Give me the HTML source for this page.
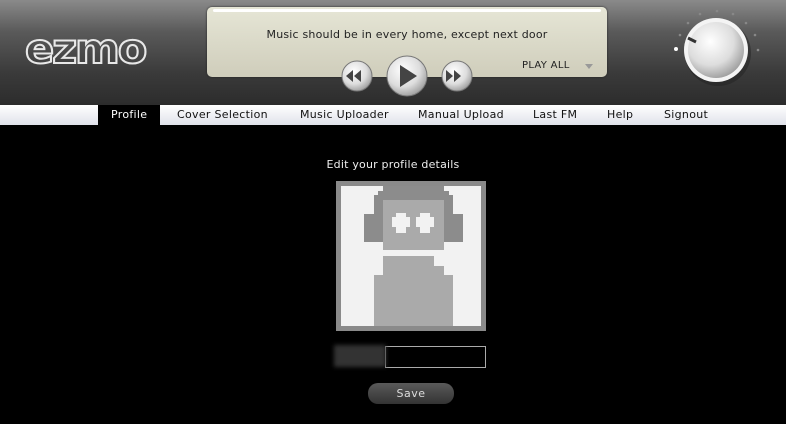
<!DOCTYPE html>
<html><head><style>
body{margin:0;width:786px;height:424px;background:#000;overflow:hidden;font-family:"DejaVu Sans","Liberation Sans",sans-serif;position:relative}
.hdr{position:absolute;left:0;top:0;width:786px;height:105px;background:linear-gradient(#8a8a8a 0%,#5a5a5a 30%,#3a3a3a 70%,#2c2c2c 100%)}
.logo{position:absolute;left:25px;top:25px;font:bold 41px "DejaVu Sans",sans-serif;color:transparent;-webkit-text-stroke:2px #e8e8e8;letter-spacing:-2px;transform:scaleX(1.05);transform-origin:left}
.panel{position:absolute;left:207px;top:7px;width:400px;height:70px;border-radius:5px;background:linear-gradient(#e6e6d6,#cfcdbb);box-shadow:0 0 2px #222}
.panel:before{content:"";position:absolute;left:6px;right:6px;top:2px;height:3px;background:#fff;border-radius:2px}
.msg{position:absolute;left:0;width:400px;top:21px;text-align:center;font-size:11px;color:#222;letter-spacing:0.2px}
.pa{position:absolute;left:315px;top:53px;font-size:10px;color:#222;letter-spacing:0.3px}
.tri{position:absolute;left:378px;top:57px;border:4px solid transparent;border-top:5px solid #999}
.nav{position:absolute;left:0;top:105px;width:786px;height:20px;background:linear-gradient(#fff,#e0e2ea);font-size:11px;color:#111;letter-spacing:0.3px}
.nav span{position:absolute;top:3px}
.act{position:absolute;left:98px;top:0;width:62px;height:20px;background:#000}
.t{position:absolute;left:0;width:786px;top:158px;text-align:center;color:#eee;font-size:11px;letter-spacing:0.2px}
.frame{position:absolute;left:336px;top:181px;width:140px;height:140px;border:5px solid #8a8a8a;background:#f2f2f2}
.inp{position:absolute;left:385px;top:346px;width:99px;height:20px;border:1px solid #aaa;background:#000}
.blur{position:absolute;left:334px;top:345px;width:52px;height:22px;background:#333;filter:blur(2px)}
.save{position:absolute;left:368px;top:383px;width:86px;height:21px;border-radius:10px;background:linear-gradient(#5a5a5a,#333);color:#ddd;font-size:11px;text-align:center;line-height:21px;letter-spacing:0.5px}
</style></head><body>
<div class="hdr"></div>
<div class="logo">ezmo</div>
<div class="panel"><div class="msg">Music should be in every home, except next door</div><div class="pa">PLAY ALL</div><div class="tri"></div></div>
<svg style="position:absolute;left:0;top:0" width="786" height="105">
<defs><radialGradient id="g" cx="0.4" cy="0.35" r="0.7"><stop offset="0" stop-color="#fff"/><stop offset="0.6" stop-color="#ddd"/><stop offset="1" stop-color="#999"/></radialGradient></defs>
<circle cx="357" cy="76" r="15" fill="url(#g)" stroke="#777"/>
<path d="M346 76 l7-6v12z M354 76 l7-6v12z" fill="#444"/>
<circle cx="407" cy="76" r="20" fill="url(#g)" stroke="#777"/>
<path d="M400 65 L417 76 L400 87z" fill="#444"/>
<circle cx="457" cy="76" r="15" fill="url(#g)" stroke="#777"/>
<path d="M453 76 l-7-6v12z M461 76 l-7-6v12z" fill="#444"/>
<g fill="#888"><circle cx="700" cy="14" r="1.3"/><circle cx="717" cy="11" r="1.3"/><circle cx="733" cy="14" r="1.3"/><circle cx="746" cy="23" r="1.3"/><circle cx="755" cy="35" r="1.3"/><circle cx="758" cy="50" r="1.3"/><circle cx="688" cy="23" r="1.3"/><circle cx="680" cy="35" r="1.3"/></g>
<circle cx="676" cy="49" r="2" fill="#fff"/>
<circle cx="718" cy="53" r="33" fill="#222" opacity="0.5"/>
<circle cx="716" cy="50" r="32" fill="#f4f4f4"/>
<circle cx="716" cy="50" r="28" fill="url(#g)"/>
<path d="M688 38 l8 4" stroke="#333" stroke-width="3"/>
</svg>
<div class="nav"><div class="act"></div>
<span style="left:111px;color:#fff">Profile</span><span style="left:177px">Cover Selection</span><span style="left:300px">Music Uploader</span><span style="left:418px">Manual Upload</span><span style="left:533px">Last FM</span><span style="left:607px">Help</span><span style="left:664px">Signout</span></div>
<div class="t">Edit your profile details</div>
<div class="frame"></div>
<svg style="position:absolute;left:0;top:0" width="786" height="424">
<g fill="#8c8c8c">
<rect x="383" y="186" width="61" height="14"/><rect x="378" y="191" width="71" height="9"/>
<rect x="374" y="195" width="9" height="19"/><rect x="444" y="195" width="9" height="19"/>
<rect x="364" y="214" width="19" height="28"/><rect x="444" y="214" width="19" height="28"/>
</g>
<g fill="#aaa">
<rect x="383" y="200" width="61" height="50"/>
<rect x="383" y="256" width="51" height="20"/><rect x="383" y="266" width="61" height="10"/>
<rect x="374" y="275" width="79" height="51"/>
</g>
<g fill="#f2f2f2">
<rect x="392" y="217" width="18" height="10"/><rect x="396" y="213" width="10" height="20"/>
<rect x="416" y="217" width="18" height="10"/><rect x="420" y="213" width="10" height="20"/>
</g>
</svg>
<div class="inp"></div><div class="blur"></div>
<div class="save">Save</div>
</body></html>
